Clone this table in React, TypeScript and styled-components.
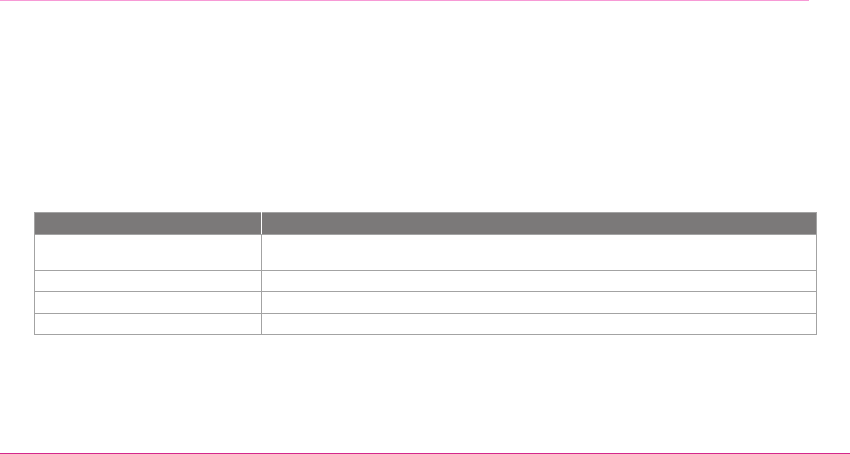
import styled, { createGlobalStyle } from "styled-components";

const GlobalStyle = createGlobalStyle`
  body {
    margin: 0;
    background: #fff;
    font-family: "Liberation Sans", Arial, sans-serif;
  }
`;

const rows = [
  { id: 1, height: 35 },
  { id: 2, height: 20 },
  { id: 3, height: 21 },
  { id: 4, height: 20 },
];

const App = () => {
  return (
    <Page>
      <GlobalStyle />
      <TopRule />
      <Main>
        <Table>
          <thead>
            <tr>
              <HeadCell $width={226} />
              <HeadCell />
            </tr>
          </thead>
          <tbody>
            {rows.map((row) => (
              <tr key={row.id}>
                <Cell $height={row.height} />
                <Cell $height={row.height} />
              </tr>
            ))}
          </tbody>
        </Table>
      </Main>
      <Footer />
    </Page>
  );
};
export default App;

const Page = styled.div`
  display: flex;
  flex-direction: column;
  min-height: 454px;
`;

const TopRule = styled.div`
  width: 809px;
  height: 1px;
  background: #f79ad6;
`;

const Main = styled.main`
  flex: 1;
  padding: 211px 0 0 34px;
`;

const Table = styled.table`
  width: 783px;
  border-collapse: collapse;
  table-layout: fixed;
`;

const HeadCell = styled.th<{ $width?: number }>`
  width: ${(p) => (p.$width ? `${p.$width}px` : "auto")};
  height: 21px;
  padding: 0;
  background: #7b7979;
  border: 1px solid #a3a3a3;
  border-right-color: #fff;
  &:last-child {
    border-right-color: #a3a3a3;
  }
`;

const Cell = styled.td<{ $height: number }>`
  height: ${(p) => p.$height}px;
  padding: 0;
  border: 1px solid #a3a3a3;
`;

const Footer = styled.footer`
  height: 1px;
  background: #d4288c;
`;
